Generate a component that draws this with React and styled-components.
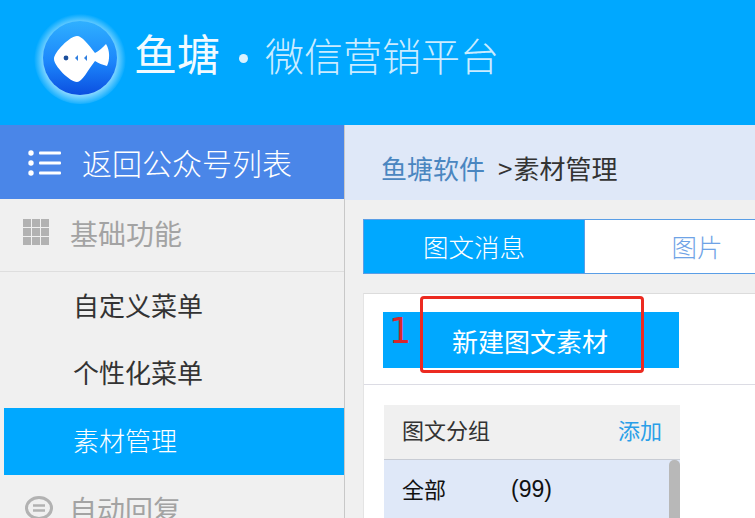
import styled, { createGlobalStyle } from "styled-components";

const CJK = `"Noto Sans CJK SC", "Liberation Sans", sans-serif`;

const GlobalStyle = createGlobalStyle`
  html, body {
    margin: 0;
    padding: 0;
    height: 518px;
    overflow: hidden;
    background: #f0f0f0;
    font-family: ${CJK};
  }
  * { box-sizing: border-box; }
`;

const Page = styled.div`
  width: 755px;
  height: 518px;
  overflow: hidden;
`;

const Header = styled.header`
  height: 125px;
  background: #00a8ff;
  display: flex;
  align-items: center;
  padding: 0 0 14px 32px;
`;

const Brand = styled.div`
  margin: 0 0 6px 6px;
  color: #fff;
  font-size: 43px;
  font-weight: 400;
  line-height: 60px;
  white-space: nowrap;
  opacity: 0.95;
`;

const BrandDot = styled.span`
  display: inline-block;
  width: 9px;
  height: 9px;
  margin: 0 17px 0 19px;
  border-radius: 50%;
  background: #e6f6ff;
  vertical-align: 8px;
`;

const BrandSub = styled.span`
  font-size: 39px;
  font-weight: 300;
  color: #d6f0ff;
`;

const Body = styled.div`
  display: flex;
  height: 393px;
`;

const Sidebar = styled.aside`
  width: 345px;
  flex-shrink: 0;
  background: #f0f0f0;
  border-right: 1px solid #c8c8c8;
`;

const BackRow = styled.div`
  height: 74px;
  background: #4a86e8;
  color: #fff;
  font-size: 30px;
  font-weight: 300;
  display: flex;
  align-items: center;
  padding-left: 28px;
  gap: 21px;
`;

const Section = styled.div`
  height: ${(p) => (p.$first ? "73px" : "auto")};
  padding: ${(p) => (p.$first ? "0 0 4px 23px" : "14px 0 0 25px")};
  border-bottom: ${(p) => (p.$first ? "1px solid #dedede" : "none")};
  display: flex;
  align-items: center;
  gap: ${(p) => (p.$first ? "20px" : "16px")};
  color: #a3a3a3;
  font-size: 28px;
  font-weight: 400;
  line-height: 40px;
`;

const Menu = styled.div`
  margin-top: 1px;
`;

const MenuItem = styled.div`
  height: 67px;
  margin: ${(p) => (p.$active ? "1px 0 0 4px" : "0 0 0 4px")};
  padding: 0 0 4px 69px;
  display: flex;
  align-items: center;
  font-size: 26px;
  font-weight: ${(p) => (p.$active ? 300 : 400)};
  background: ${(p) => (p.$active ? "#00a8ff" : "transparent")};
  color: ${(p) => (p.$active ? "#fff" : "#333")};
`;

const Main = styled.main`
  flex: 1;
  min-width: 0;
`;

const Crumbs = styled.div`
  height: 75px;
  background: #dfe8f8;
  padding: 10px 0 0 36px;
  display: flex;
  align-items: center;
  font-size: 26px;
  font-weight: 400;
  color: #333;
  white-space: nowrap;
`;

const CrumbLink = styled.span`
  color: #4a86c0;
  margin-right: 13px;
`;

const CrumbSep = styled.span`
  margin-right: 1px;
`;

const Tabs = styled.div`
  display: flex;
  height: 55px;
  margin: 19px 0 19px 18px;
`;

const Tab = styled.div`
  flex: ${(p) => (p.$active ? "0 0 222px" : "1")};
  display: flex;
  align-items: center;
  justify-content: center;
  font-size: 25.5px;
  font-weight: 300;
  color: ${(p) => (p.$active ? "#fff" : "#6fa3e6")};
  background: ${(p) => (p.$active ? "#00a8ff" : "#fff")};
  border: 1px solid #5a9ee6;
  border-left: ${(p) => (p.$active ? "1px solid #5a9ee6" : "none")};
  border-right: ${(p) => (p.$active ? "1px solid #5a9ee6" : "none")};
  padding: ${(p) => (p.$active ? "0 0 3px" : "0 0 3px 54px")};
`;

const Panel = styled.section`
  margin-left: 18px;
  height: 225px;
  background: #fff;
  border-top: 1px solid #dcdcdc;
  border-left: 1px solid #e4e4e4;
`;

const Toolbar = styled.div`
  position: relative;
  height: 91px;
  padding: 18px 0 0 19px;
  border-bottom: 1px solid #dcdce4;
`;

const NewButton = styled.div`
  width: 296px;
  height: 56px;
  background: #00a8ff;
  color: #fff;
  font-size: 26px;
  font-weight: 400;
  padding: 11px 0 0 69px;
  line-height: 36px;
  white-space: nowrap;
`;

const RedBox = styled.div`
  position: absolute;
  left: 56px;
  top: 2px;
  width: 224px;
  height: 77px;
  border: 3px solid #ec2a20;
  border-radius: 4px;
`;

const RedNumber = styled.span`
  position: absolute;
  left: 25px;
  top: 12px;
  color: #d8262c;
  font-family: "DejaVu Sans", sans-serif;
  font-size: 35px;
  line-height: 50px;
`;

const Group = styled.div`
  width: 296px;
  margin: 20px 0 0 20px;
`;

const GroupHead = styled.div`
  height: 55px;
  background: #f0f0f0;
  border-bottom: 1px solid #c8ccd4;
  display: flex;
  align-items: center;
  justify-content: space-between;
  padding: 0 18px 6px;
  font-size: 22px;
  font-weight: 400;
  color: #333;
`;

const AddLink = styled.span`
  color: #2a9fe8;
`;

const GroupList = styled.div`
  position: relative;
  height: 60px;
  background: #dfe8f8;
`;

const GroupRow = styled.div`
  display: flex;
  align-items: center;
  height: 60px;
  padding: 0 0 4px 18px;
  font-size: 22px;
  color: #111;
`;

const GroupCount = styled.span`
  margin: 3px 0 0 65px;
  font-family: "Liberation Sans", sans-serif;
  font-size: 23px;
`;

const ScrollThumb = styled.div`
  position: absolute;
  right: 0;
  top: 0;
  width: 11px;
  height: 60px;
  background: #b8b8b8;
  border-radius: 5px 5px 0 0;
`;

const FishLogo = () => (
  <svg width="96" height="96" viewBox="0 0 96 96" style={{ flexShrink: 0 }}>
    <defs>
      <radialGradient id="halo" cx="50%" cy="52%" r="50%">
        <stop offset="76%" stopColor="#bdeaff" stopOpacity="0.75" />
        <stop offset="100%" stopColor="#bdeaff" stopOpacity="0" />
      </radialGradient>
      <linearGradient id="disc" x1="0" y1="0" x2="0" y2="1">
        <stop offset="0%" stopColor="#2fb0ff" />
        <stop offset="55%" stopColor="#1c86fb" />
        <stop offset="100%" stopColor="#0b4fe0" />
      </linearGradient>
    </defs>
    <circle cx="48" cy="50" r="46" fill="url(#halo)" />
    <circle cx="48" cy="50" r="37" fill="url(#disc)" />
    <path
      d="M45 28 C50 28 56 36 63 45 C67 43 71 39 74 36 C78 42 78 52 75 58 C71 57 66 55 63 53 C56 62 50 74 45 74 C38 74 22 58 22 51 C22 44 38 28 45 28 Z"
      fill="#fff"
    />
    <circle cx="34" cy="50" r="2.4" fill="#1c4f9c" />
    <path d="M46 47 L43 50 L46 53 Z" fill="#2f7fe0" />
    <path d="M55 47 L52 50 L55 53 Z" fill="#2f7fe0" />
  </svg>
);

const ListIcon = () => (
  <svg width="33" height="27" viewBox="0 0 33 27" fill="#fff" style={{ flexShrink: 0 }}>
    <circle cx="3" cy="4" r="2.7" />
    <circle cx="3" cy="14" r="2.7" />
    <circle cx="3" cy="24" r="2.7" />
    <rect x="11" y="2.5" width="22" height="3" rx="1" />
    <rect x="11" y="12.5" width="22" height="3" rx="1" />
    <rect x="11" y="22.5" width="22" height="3" rx="1" />
  </svg>
);

const GridIcon = () => (
  <svg width="27" height="27" viewBox="0 0 27 27" fill="#b2b2b2" style={{ flexShrink: 0, marginBottom: 2 }}>
    {[0, 9, 18].map((y) =>
      [0, 9, 18].map((x) => <rect key={`${x}-${y}`} x={x} y={y} width="8" height="8" />)
    )}
  </svg>
);

const ChatIcon = () => (
  <svg width="28" height="26" viewBox="0 0 28 26" fill="none" stroke="#b2b2b2" style={{ flexShrink: 0 }}>
    <ellipse cx="14" cy="12" rx="12.5" ry="10.5" strokeWidth="3" />
    <path d="M8 9.5H20M8 14.5H20" strokeWidth="2.5" />
  </svg>
);

const App = () => (
  <Page>
    <GlobalStyle />
    <Header>
      <FishLogo />
      <Brand>
        鱼塘
        <BrandDot />
        <BrandSub>微信营销平台</BrandSub>
      </Brand>
    </Header>
    <Body>
      <Sidebar>
        <BackRow>
          <ListIcon />
          返回公众号列表
        </BackRow>
        <Section $first>
          <GridIcon />
          基础功能
        </Section>
        <Menu>
          <MenuItem>自定义菜单</MenuItem>
          <MenuItem>个性化菜单</MenuItem>
          <MenuItem $active>素材管理</MenuItem>
        </Menu>
        <Section>
          <ChatIcon />
          自动回复
        </Section>
      </Sidebar>
      <Main>
        <Crumbs>
          <CrumbLink>鱼塘软件</CrumbLink>
          <CrumbSep>&gt;</CrumbSep>
          素材管理
        </Crumbs>
        <Tabs>
          <Tab $active>图文消息</Tab>
          <Tab>图片</Tab>
        </Tabs>
        <Panel>
          <Toolbar>
            <NewButton>新建图文素材</NewButton>
            <RedBox />
            <RedNumber>1</RedNumber>
          </Toolbar>
          <Group>
            <GroupHead>
              图文分组
              <AddLink>添加</AddLink>
            </GroupHead>
            <GroupList>
              <GroupRow>
                全部
                <GroupCount>(99)</GroupCount>
              </GroupRow>
              <ScrollThumb />
            </GroupList>
          </Group>
        </Panel>
      </Main>
    </Body>
  </Page>
);

export default App;
